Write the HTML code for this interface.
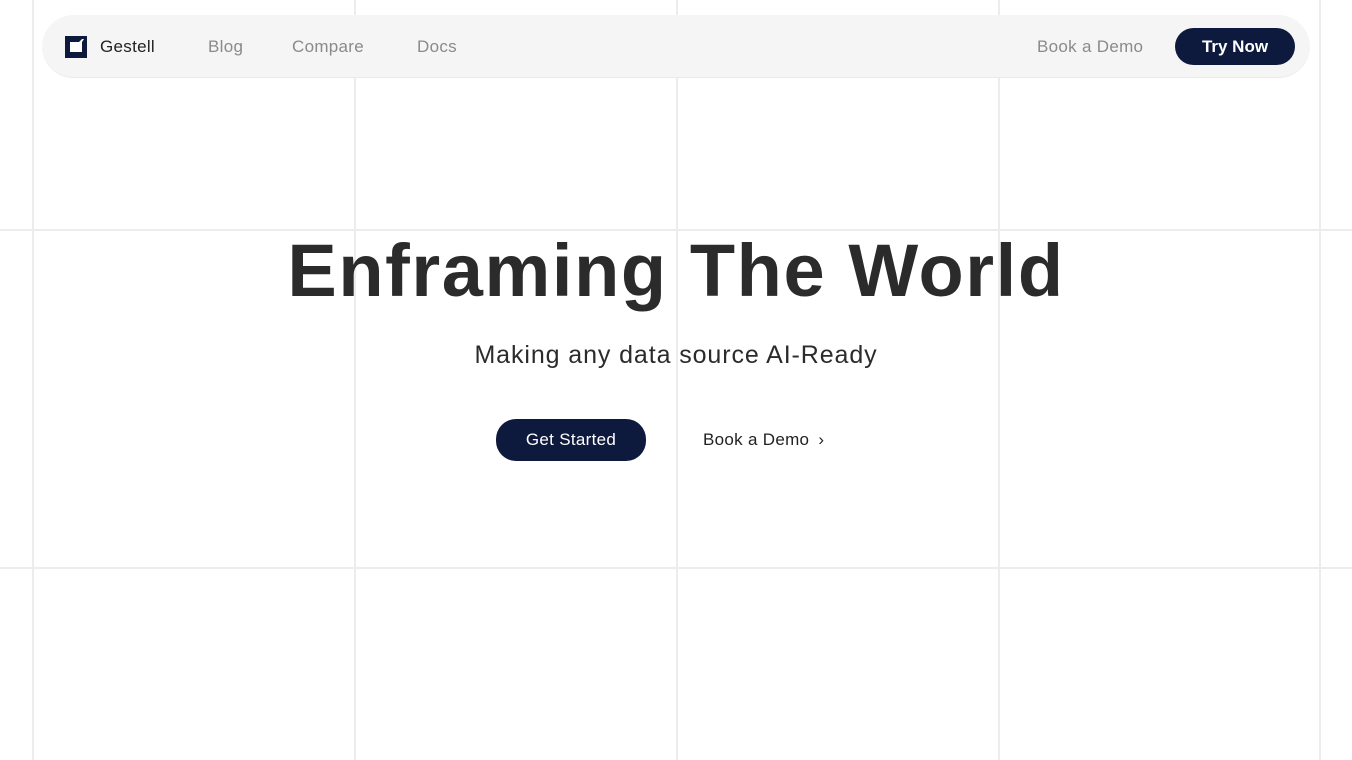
<!DOCTYPE html>
<html><head><meta charset="utf-8"><style>
*{margin:0;padding:0;box-sizing:border-box}
body{width:1352px;height:760px;background:#fff;position:relative;overflow:hidden;font-family:"Liberation Sans",sans-serif;color:#222}
.v{position:absolute;top:0;width:2px;height:760px;background:#ececec}
.h{position:absolute;left:0;width:1352px;height:2px;background:#ececec}
.nav{position:absolute;left:42px;top:15px;width:1268px;height:63px;border-radius:32px;background:#f5f5f5;border-bottom:1px solid #ebebeb}
.nav span{position:absolute;top:22px;font-size:17px;color:#8a8a8a;letter-spacing:0.3px}
.btn{position:absolute;background:#0e1a3d;color:#fff;border-radius:20px;text-align:center}
h1{position:absolute;left:0;width:1352px;top:228px;text-align:center;font-size:74px;font-weight:bold;color:#2b2b2b;letter-spacing:1.6px}
.sub{position:absolute;left:0;width:1352px;top:341px;text-align:center;font-size:25px;color:#2b2b2b;letter-spacing:0.9px}
</style></head><body>
<div class="v" style="left:32px"></div><div class="v" style="left:354px"></div><div class="v" style="left:676px"></div><div class="v" style="left:998px"></div><div class="v" style="left:1319px"></div>
<div class="h" style="top:229px"></div><div class="h" style="top:567px"></div>
<div class="nav">
<svg style="position:absolute;left:23px;top:21px" width="22" height="22" viewBox="0 0 22 22"><rect width="22" height="22" fill="#0e1a3d"/><path d="M5 6H14L17 3H19L17 6V16H5Z" fill="#fff"/></svg>
<span style="left:58px;color:#222">Gestell</span>
<span style="left:166px">Blog</span>
<span style="left:250px">Compare</span>
<span style="left:375px">Docs</span>
<span style="left:995px">Book a Demo</span>
<div class="btn" style="left:1133px;top:13px;width:120px;height:37px;line-height:37px;font-size:17px;font-weight:bold">Try Now</div>
</div>
<h1>Enframing The World</h1>
<div class="sub">Making any data source AI-Ready</div>
<div class="btn" style="left:496px;top:419px;width:150px;height:42px;line-height:42px;font-size:17px;letter-spacing:0.3px">Get Started</div>
<div style="position:absolute;left:703px;top:430px;font-size:17px;color:#222;letter-spacing:0.3px">Book a Demo <span style="margin-left:4px">›</span></div>
</body></html>
